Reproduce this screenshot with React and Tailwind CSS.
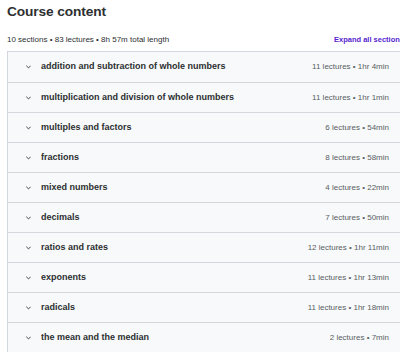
import React from 'react';

const sections = [
  { title: 'addition and subtraction of whole numbers', meta: '11 lectures • 1hr 4min' },
  { title: 'multiplication and division of whole numbers', meta: '11 lectures • 1hr 1min' },
  { title: 'multiples and factors', meta: '6 lectures • 54min' },
  { title: 'fractions', meta: '8 lectures • 58min' },
  { title: 'mixed numbers', meta: '4 lectures • 22min' },
  { title: 'decimals', meta: '7 lectures • 50min' },
  { title: 'ratios and rates', meta: '12 lectures • 1hr 11min' },
  { title: 'exponents', meta: '11 lectures • 1hr 13min' },
  { title: 'radicals', meta: '11 lectures • 1hr 18min' },
  { title: 'the mean and the median', meta: '2 lectures • 7min' },
];

const Chevron = () => (
  <svg width="5" height="4" viewBox="0 0 5 4" fill="none" className="shrink-0">
    <path d="M0.6 1 L2.5 2.9 L4.4 1" stroke="#2d2f31" strokeWidth="0.9" strokeLinecap="round" />
  </svg>
);

const App = () => {
  return (
    <div className="w-[400px] h-[352px] overflow-hidden bg-white text-[#2d2f31] font-['Liberation_Sans',Arial,sans-serif]">
      <div className="w-[397px] ml-[7px]">
        <h2 className="text-[13.7px] leading-[18px] font-bold pt-[3px] tracking-[-0.1px]">Course content</h2>
        <div className="flex items-center justify-between mt-[13px] h-[12px]">
          <span className="text-[8px] text-[#2d2f31]">10 sections • 83 lectures • 8h 57m total length</span>
          <button className="text-[7.5px] font-bold text-[#5624d0] whitespace-nowrap">Expand all sections</button>
        </div>
        <div className="mt-[5px] border border-[#d1d7dc]">
          {sections.map((s, i) => (
            <div
              key={s.title}
              className={`flex items-center h-[30px] bg-[#f7f9fa] pl-[18px] pr-[14px] ${i > 0 ? 'border-t border-[#d1d7dc]' : ''}`}
            >
              <Chevron />
              <span className="ml-[10px] text-[9px] font-bold flex-1 truncate">{s.title}</span>
              <span className="text-[8px] text-[#5a5e62] whitespace-nowrap">{s.meta}</span>
            </div>
          ))}
        </div>
      </div>
    </div>
  );
};

export default App;
